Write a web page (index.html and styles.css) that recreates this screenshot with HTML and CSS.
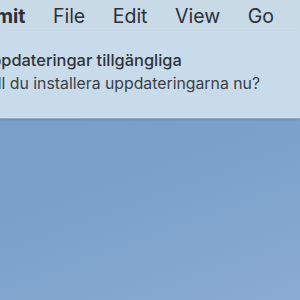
FILE: index.html
```html
<!DOCTYPE html>
<html lang="sv">
<head>
    <meta charset="UTF-8">
    <meta name="viewport" content="width=device-width, initial-scale=1.0">
    <title>Uppdateringar</title>
    <link rel="stylesheet" href="styles.css">
</head>
<body>
    <div class="menubar">
        <span class="menu-item app-name">Commit</span>
        <span class="menu-item">File</span>
        <span class="menu-item">Edit</span>
        <span class="menu-item">View</span>
        <span class="menu-item">Go</span>
    </div>

    <div class="notification">
        <div class="notification-text">
            <div class="notification-title">Uppdateringar tillgängliga</div>
            <div class="notification-body">Vill du installera uppdateringarna nu?</div>
        </div>
    </div>

    <div class="desktop"></div>
</body>
</html>
```
FILE: styles.css
```css
* {
    margin: 0;
    padding: 0;
    box-sizing: border-box;
    font-family: Inter, "Liberation Sans", sans-serif;
}

html, body {
    width: 300px;
    height: 300px;
    overflow: hidden;
}

body {
    display: flex;
    flex-direction: column;
    background: linear-gradient(160deg, #789ec8 0%, #7ca2cb 60%, #8aabd3 100%);
}

.menubar {
    height: 31px;
    background-color: #c9dae7;
    display: flex;
    align-items: center;
    gap: 27.5px;
    overflow: hidden;
    white-space: nowrap;
}

.menu-item {
    font-size: 19.5px;
    color: #2b3139;
}

.app-name {
    font-weight: 700;
    margin-left: -49px;
}

.notification {
    height: 88px;
    background-color: #c8dbea;
    border-bottom: 1px solid #92adc8;
    box-shadow: 0 1px 2px rgba(40, 70, 110, 0.25);
    overflow: hidden;
    white-space: nowrap;
}

.notification-text {
    padding-top: 18px;
}

.notification-title {
    font-size: 16.4px;
    font-weight: 500;
    color: #30343a;
    line-height: 23px;
    margin-left: -21px;
}

.notification-body {
    font-size: 15.8px;
    color: #3a3f46;
    line-height: 23px;
    margin-left: -17px;
}

.desktop {
    flex: 1;
}
```
